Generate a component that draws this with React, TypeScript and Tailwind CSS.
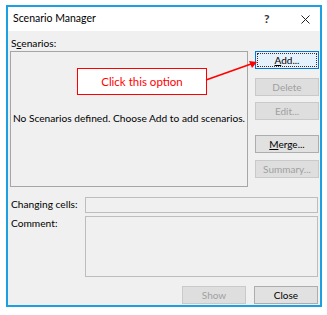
import React from "react";

const font = { fontFamily: 'Lato, "Noto Sans", sans-serif' };

const Btn = ({
  children,
  disabled,
  focused,
}: {
  children: React.ReactNode;
  disabled?: boolean;
  focused?: boolean;
}) => {
  if (focused) {
    return (
      <div className="w-[64px] h-[18px] border border-[#0078d7] bg-[#e5f1fb] p-[1px]">
        <div className="w-full h-full border border-dotted border-[#333] flex items-center justify-center text-[10px] leading-none text-black">
          {children}
        </div>
      </div>
    );
  }
  return (
    <div
      className={
        disabled
          ? "w-[64px] h-[18px] border border-[#c9c9c9] bg-[#dedede] flex items-center justify-center text-[10px] leading-none text-[#a0a0a0]"
          : "w-[64px] h-[18px] border border-[#adadad] bg-[#e1e1e1] flex items-center justify-center text-[10px] leading-none text-black"
      }
    >
      {children}
    </div>
  );
};

export default function App() {
  return (
    <div className="w-[327px] h-[315px] bg-white pt-[5px] pl-[6px] relative whitespace-nowrap" style={font}>
      <div className="w-[316px] h-[302px] border-[2px] border-[#1ba1e2] bg-[#f0f0f0] flex flex-col">
        {/* title bar */}
        <div className="h-[24px] shrink-0 bg-white flex items-center pl-[5px] text-[10.5px] text-black">
          <span className="flex-1">Scenario Manager</span>
          <span className="w-[6px] mr-[31px] text-[12px] font-bold text-[#333]">?</span>
          <svg width="9" height="9" viewBox="0 0 9 9" className="mr-[10px]">
            <path d="M0.5 0.5 L8.5 8.5 M8.5 0.5 L0.5 8.5" stroke="#222" strokeWidth="1" />
          </svg>
        </div>

        {/* body */}
        <div className="flex-1 pl-[2px] pr-[1px] flex flex-col">
          <div className="h-[20px] shrink-0 pt-[5px] text-[10.2px] leading-[14px] pl-[1px]">
            S<span className="underline">c</span>enarios:
          </div>
          <div className="flex gap-[7px] shrink-0">
            <div className="w-[238px] h-[136px] border border-[#a6a6a6] flex items-center justify-center text-[10.2px] text-black">
              No Scenarios defined. Choose Add to add scenarios.
            </div>
            <div className="flex flex-col">
              <Btn focused>
                <span>
                  <span className="underline">A</span>dd...
                </span>
              </Btn>
              <div className="mt-[9px]">
                <Btn disabled>Delete</Btn>
              </div>
              <div className="mt-[6px]">
                <Btn disabled>Edit...</Btn>
              </div>
              <div className="mt-[15px]">
                <Btn>
                  <span>
                    <span className="underline">M</span>erge...
                  </span>
                </Btn>
              </div>
              <div className="mt-[7px]">
                <Btn disabled>Summary...</Btn>
              </div>
            </div>
          </div>

          <div className="flex mt-[10px] items-center shrink-0">
            <div className="w-[75px] pl-[1px] text-[10.2px]">Changing cells:</div>
            <div className="w-[233px] h-[16px] border border-[#bdbdbd]" />
          </div>
          <div className="flex mt-[3px] shrink-0">
            <div className="w-[75px] pl-[1px] text-[10.2px] leading-[14px]">Comment:</div>
            <div className="w-[233px] h-[61px] border border-[#bdbdbd]" />
          </div>
          <div className="flex justify-end gap-[8px] mt-[9px] pr-[1px] shrink-0">
            <Btn disabled>Show</Btn>
            <Btn>Close</Btn>
          </div>
        </div>
      </div>

      {/* annotation */}
      <div className="absolute left-[77px] top-[68px] w-[130px] h-[27px] border border-[#ff0000] bg-white flex items-center justify-center text-[11.5px] text-[#ff0000]">
        Click this option
      </div>
      <svg className="absolute left-0 top-0 pointer-events-none" width="327" height="315">
        <line x1="206" y1="80" x2="251" y2="64" stroke="#ff0000" strokeWidth="1.6" />
        <path d="M257 62 L249 61 L252 68 Z" fill="#ff0000" />
      </svg>
    </div>
  );
}
